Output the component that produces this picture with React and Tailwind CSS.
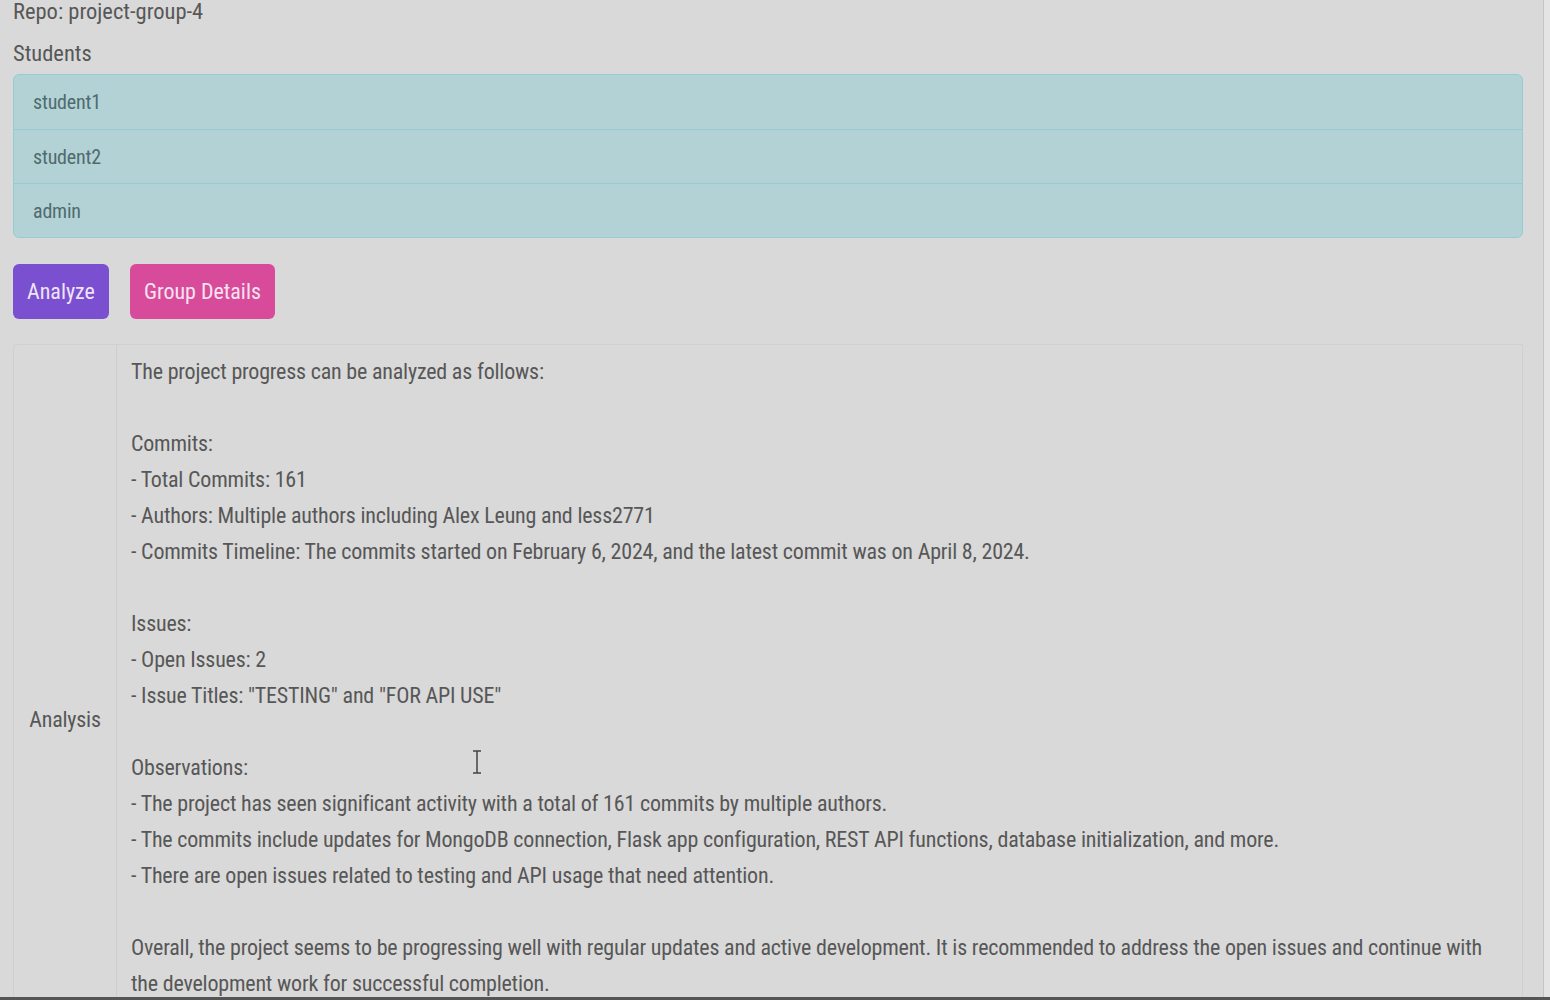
import React from 'react'

const ANALYSIS = [
  'The project progress can be analyzed as follows:',
  '',
  'Commits:',
  '- Total Commits: 161',
  '- Authors: Multiple authors including Alex Leung and less2771',
  '- Commits Timeline: The commits started on February 6, 2024, and the latest commit was on April 8, 2024.',
  '',
  'Issues:',
  '- Open Issues: 2',
  '- Issue Titles: "TESTING" and "FOR API USE"',
  '',
  'Observations:',
  '- The project has seen significant activity with a total of 161 commits by multiple authors.',
  '- The commits include updates for MongoDB connection, Flask app configuration, REST API functions, database initialization, and more.',
  '- There are open issues related to testing and API usage that need attention.',
  '',
  'Overall, the project seems to be progressing well with regular updates and active development. It is recommended to address the open issues and continue with the development work for successful completion.',
]

const STUDENTS = ['student1', 'student2', 'admin']

export default function App() {
  return (
    <div
      className="relative w-[1550px] h-[1000px] overflow-hidden bg-[#d9d9d9] text-[#575757] font-stretch-[76%] tracking-[-0.2px]"
      style={{ fontFamily: 'Roboto, "Noto Sans", sans-serif' }}
    >
      <div className="pl-[13px] pr-[27px] -mt-[6px]">
        <div className="text-[22.5px] leading-[34px] tracking-normal">Repo: project-group-4</div>
        <div className="text-[22.5px] leading-[34px] tracking-normal mt-[8px]">Students</div>

        <ul className="mt-[4px] rounded-[6px] border border-[#97cbd2] bg-[#b3d2d6] overflow-hidden">
          {STUDENTS.map((s, i) => (
            <li
              key={s}
              className={`h-[54px] flex items-center pl-[19px] text-[20px] text-[#4f6b6e] ${
                i > 0 ? 'border-t border-[#97cbd2]' : ''
              }`}
            >
              {s}
            </li>
          ))}
        </ul>

        <div className="flex gap-[21px] mt-[26px]">
          <button className="h-[55px] px-[14px] rounded-[6px] bg-[#7a4fd0] text-[#eee4f6] text-[22px] tracking-normal">
            Analyze
          </button>
          <button className="h-[55px] px-[14px] rounded-[6px] bg-[#d84b9b] text-[#f6e3ef] text-[22px] tracking-normal">
            Group Details
          </button>
        </div>

        <div className="mt-[25px] flex border border-[#d0d0d0] rounded-tl-[4px]">
          <div className="w-[103px] shrink-0 flex items-center justify-center border-r border-[#cecece] text-[22px]">
            Analysis
          </div>
          <div className="flex-1 pl-[14px] pr-[16px] pt-[9px] pb-[92px] text-[22px] leading-[36px]">
            {ANALYSIS.map((line, i) => (
              <div key={i} className="min-h-[36px]">
                {line}
              </div>
            ))}
          </div>
        </div>
      </div>

      {/* text cursor */}
      <svg className="absolute left-[471px] top-[750px]" width="12" height="24" viewBox="0 0 12 24">
        <path d="M2 1h8M2 23h8M6 1v22" stroke="#444" strokeWidth="1.5" fill="none" />
      </svg>

      {/* window edges */}
      <div className="absolute right-0 top-0 w-[7px] h-full bg-[#e4e4e4] border-l border-[#c4c4c4]" />
      <div className="absolute left-0 bottom-0 w-full h-[3px] bg-[#555]" />
    </div>
  )
}
